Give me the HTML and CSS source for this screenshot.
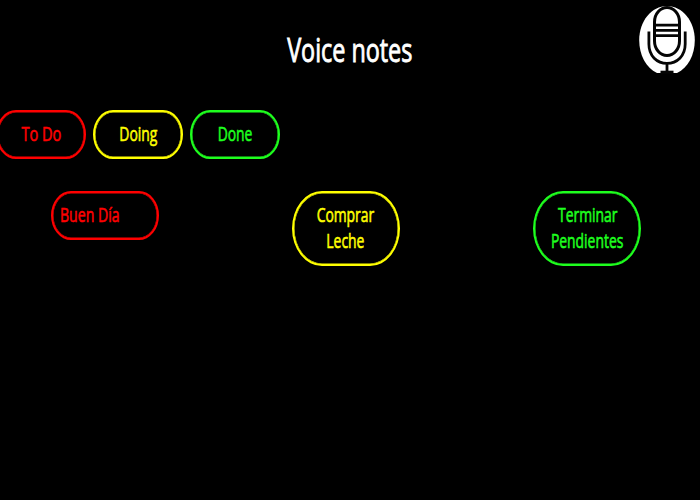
FILE: index.html
```html
<!DOCTYPE html>
<html lang="es">
<head>
<meta charset="utf-8">
<title>Voice notes</title>
<link rel="stylesheet" href="styles.css">
</head>
<body>
<header class="header">
  <h1 class="title"><span class="ink">Voice notes</span></h1>
  <button class="record" aria-label="Record">
    <svg width="56" height="68" viewBox="0 0 56 68" fill="none" stroke="#050505" stroke-width="3">
      <path d="M18 67C7 62 .2 49 .2 34C.2 15.2 12.6 0 28 0S55.8 15.2 55.8 34C55.8 49 49 62 38 67Z" fill="#fff" stroke="none"/>
      <rect x="15.5" y="1.5" width="25" height="48" rx="12.5" ry="14.5"/>
      <path d="M15.5 19.1h25M15.5 24.4h25M15.5 29.7h25" stroke-width="2.8"/>
      <path d="M9.9 25.5V38C9.9 50 18 57.4 28 57.4S46.2 50 46.2 38V25.5M28 57.4V66" stroke-width="2.8"/>
      <path d="M21.5 66.2h13" stroke-width="3"/>
    </svg>
  </button>
</header>
<nav class="filters">
  <button class="pill todo"><span class="ink wide">To Do</span></button>
  <button class="pill doing"><span class="ink">Doing</span></button>
  <button class="pill done"><span class="ink">Done</span></button>
</nav>
<main class="board">
  <section class="column"><div class="note todo left"><span class="ink">Buen Día</span></div></section>
  <section class="column"><div class="note tall doing"><span class="ink">Comprar</span><span class="ink">Leche</span></div></section>
  <section class="column"><div class="note tall done"><span class="ink">Terminar</span><span class="ink">Pendientes</span></div></section>
</main>
</body>
</html>
```
FILE: styles.css
```css
* { box-sizing: border-box; }
body {
  margin: 0;
  height: 500px;
  overflow: hidden;
  background: #000;
  color: #fff;
  font-family: "Open Sans", sans-serif;
}
.header {
  display: grid;
  grid-template-columns: 1fr 150px 1fr;
  height: 110px;
  padding: 6px 5px 0;
}
.title {
  grid-column: 2;
  margin: 24px 0 0;
  font-size: 32px;
  font-weight: 400;
  line-height: 40px;
  white-space: nowrap;
  display: flex;
  justify-content: center;
}
.record {
  justify-self: end;
  align-self: start;
  width: 56px;
  height: 68px;
  padding: 0;
  border: 0;
  background: none;
}
.record svg { display: block; }
.ink {
  display: block;
  white-space: nowrap;
  -webkit-text-stroke: 0.6px currentColor;
  transform: scaleX(0.695);
}
.title .ink {
  -webkit-text-stroke-width: 0.9px;
  transform: scaleX(0.73);
}
.ink.wide { transform: scaleX(0.73); }
.filters {
  display: flex;
  gap: 7px;
  margin-left: -4px;
}
.pill, .note {
  display: flex;
  flex-direction: column;
  align-items: center;
  justify-content: center;
  height: 49px;
  padding: 0 0 2px;
  border: 2px solid currentColor;
  border-radius: 20px / 24.5px;
  box-shadow: inset 0 0 0 0.5px currentColor;
  background: transparent;
  font: 20px/26px "Open Sans", sans-serif;
}
.pill { width: 90px; }
.board {
  display: grid;
  grid-template-columns: repeat(3, 241px);
  margin: 32px 0 0 -16px;
}
.column {
  display: flex;
  justify-content: center;
  align-items: flex-start;
}
.note { width: 108px; }
.note.tall {
  height: 75px;
  border-radius: 30px / 37.5px;
}
.note.tall.done { padding-left: 2px; }
.note.left {
  align-items: flex-start;
  padding-left: 7px;
}
.left .ink {
  transform: scaleX(0.705);
  transform-origin: left;
}
.todo { color: #f00; }
.doing { color: #ff0; }
.done { color: #1eff1e; }
```
